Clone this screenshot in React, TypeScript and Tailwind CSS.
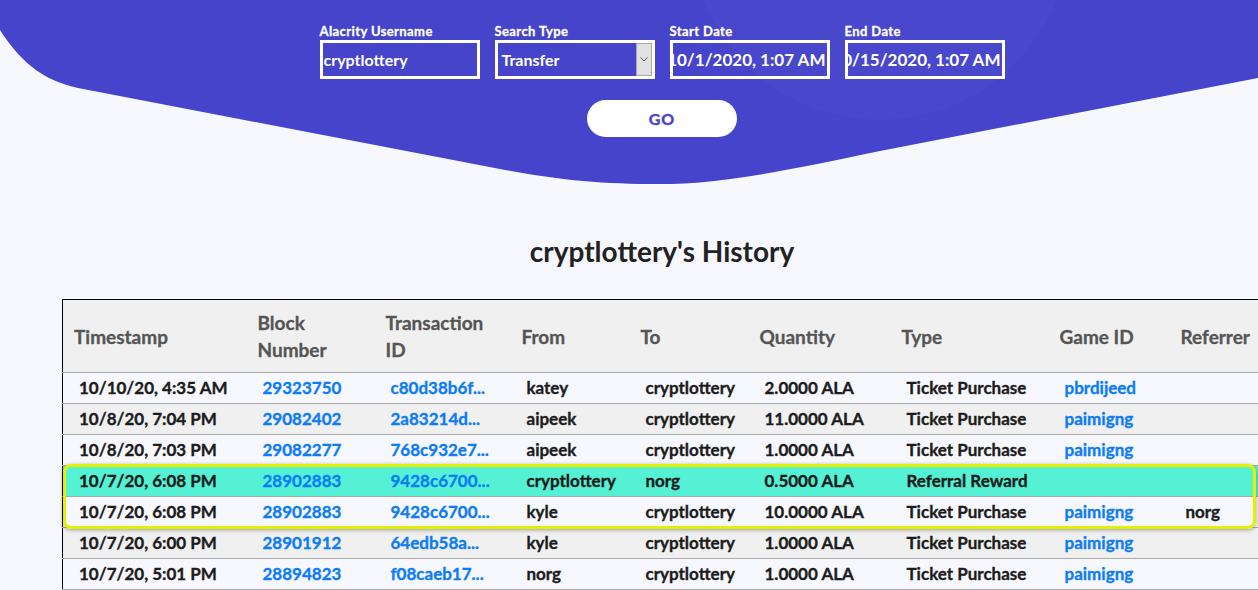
import React from 'react';

interface Row {
  time: string;
  block: string;
  tx: string;
  from: string;
  to: string;
  qty: string;
  type: string;
  game: string;
  referrer: string;
}

const rows: Row[] = [
  { time: '10/10/20, 4:35 AM', block: '29323750', tx: 'c80d38b6f...', from: 'katey', to: 'cryptlottery', qty: '2.0000 ALA', type: 'Ticket Purchase', game: 'pbrdijeed', referrer: '' },
  { time: '10/8/20, 7:04 PM', block: '29082402', tx: '2a83214d...', from: 'aipeek', to: 'cryptlottery', qty: '11.0000 ALA', type: 'Ticket Purchase', game: 'paimigng', referrer: '' },
  { time: '10/8/20, 7:03 PM', block: '29082277', tx: '768c932e7...', from: 'aipeek', to: 'cryptlottery', qty: '1.0000 ALA', type: 'Ticket Purchase', game: 'paimigng', referrer: '' },
  { time: '10/7/20, 6:08 PM', block: '28902883', tx: '9428c6700...', from: 'cryptlottery', to: 'norg', qty: '0.5000 ALA', type: 'Referral Reward', game: '', referrer: '' },
  { time: '10/7/20, 6:08 PM', block: '28902883', tx: '9428c6700...', from: 'kyle', to: 'cryptlottery', qty: '10.0000 ALA', type: 'Ticket Purchase', game: 'paimigng', referrer: 'norg' },
  { time: '10/7/20, 6:00 PM', block: '28901912', tx: '64edb58a...', from: 'kyle', to: 'cryptlottery', qty: '1.0000 ALA', type: 'Ticket Purchase', game: 'paimigng', referrer: '' },
  { time: '10/7/20, 5:01 PM', block: '28894823', tx: 'f08caeb17...', from: 'norg', to: 'cryptlottery', qty: '1.0000 ALA', type: 'Ticket Purchase', game: 'paimigng', referrer: '' },
];

function Field({ label, children }: { label: string; children: React.ReactNode }) {
  return (
    <div className="w-[160px] flex flex-col">
      <span className="text-[13px] font-bold tracking-[0.4px] text-white leading-[14px] mb-[2px] [-webkit-text-stroke:0.3px_currentColor]">{label}</span>
      <div className="h-[39px] border-[3px] border-white flex items-center overflow-hidden">{children}</div>
    </div>
  );
}

export default function App() {
  return (
    <div className="relative min-h-screen overflow-hidden bg-[#f7f8fe] font-['Lato','Liberation_Sans',sans-serif]">
      {/* blue header wave */}
      <svg className="absolute top-0 left-0" width="1258" height="190" viewBox="0 0 1258 190">
        <path
          d="M0,0 H1258 V78 L880,151 C780,172 720,184 660,184 C600,184 560,180 500,169 L78,88 C40,80 18,58 0,30 Z"
          fill="#4544cb"
        />
        <circle cx="880" cy="-70" r="190" fill="#ffffff" fillOpacity="0.025" />
      </svg>

      <div className="relative w-[1324px] flex flex-col items-center">
        {/* search form */}
        <div className="flex gap-[15px] pt-[24px]">
          <Field label="Alacrity Username">
            <span className="pl-[1px] text-[16px] font-bold text-white">cryptlottery</span>
          </Field>
          <Field label="Search Type">
            <span className="flex-1 pl-[4px] text-[16px] font-bold text-white">Transfer</span>
            <span className="w-[16px] h-[33px] bg-[#e1e1e1] border border-[#a9a9a9] flex items-center justify-center">
              <svg width="8" height="5" viewBox="0 0 8 5">
                <path d="M0.5 0.5 L4 4 L7.5 0.5" stroke="#555" strokeWidth="1" fill="none" />
              </svg>
            </span>
          </Field>
          <Field label="Start Date">
            <div className="w-full flex justify-end pr-[1px]">
              <span className="whitespace-nowrap text-[17px] font-bold text-white">10/1/2020, 1:07 AM</span>
            </div>
          </Field>
          <Field label="End Date">
            <div className="w-full flex justify-end pr-[1px]">
              <span className="whitespace-nowrap text-[17px] font-bold text-white">10/15/2020, 1:07 AM</span>
            </div>
          </Field>
        </div>

        <button className="mt-[21px] w-[150px] h-[37px] rounded-full bg-white text-[#4544cb] text-[16px] font-bold tracking-[1px] [-webkit-text-stroke:0.4px_currentColor]">GO</button>

        <h1 className="mt-[97px] text-[28px] font-bold text-[#222] leading-[34px]">cryptlottery's History</h1>

        {/* history table */}
        <div className="relative mt-[31px] w-[1200px]">
          <table className="w-full table-fixed border-collapse border-l border-t border-black">
            <colgroup>
              <col className="w-[184px]" />
              <col className="w-[128px]" />
              <col className="w-[136px]" />
              <col className="w-[119px]" />
              <col className="w-[119px]" />
              <col className="w-[142px]" />
              <col className="w-[158px]" />
              <col className="w-[121px]" />
              <col className="w-[93px]" />
            </colgroup>
            <thead>
              <tr className="h-[73px] bg-[#f0f0f0] border-b border-[#aaa] text-left text-[19px] leading-[27px] text-[#555] font-bold [-webkit-text-stroke:0.3px_currentColor]">
                <th className="pl-[11px]">Timestamp</th>
                <th className="pl-[11px]">Block<br />Number</th>
                <th className="pl-[11px]">Transaction<br />ID</th>
                <th className="pl-[11px]">From</th>
                <th className="pl-[11px]">To</th>
                <th className="pl-[11px]">Quantity</th>
                <th className="pl-[11px]">Type</th>
                <th className="pl-[11px]">Game ID</th>
                <th className="pl-[11px]">Referrer</th>
              </tr>
            </thead>
            <tbody>
              {rows.map((r, i) => (
                <tr
                  key={i}
                  className={
                    'h-[31px] border-b border-[#aaa] text-[17px] font-bold text-[#1c1c1c] [-webkit-text-stroke:0.35px_currentColor] ' +
                    (i === 3 ? 'bg-[#55f1d4]' : i % 2 === 1 ? 'bg-[#f0f0f0]' : 'bg-[#f7f8fe]')
                  }
                >
                  <td className="pl-[16px] whitespace-nowrap">{r.time}</td>
                  <td className="pl-[16px] text-[#0d7cf6]">{r.block}</td>
                  <td className="pl-[16px] text-[#0d7cf6] whitespace-nowrap">{r.tx}</td>
                  <td className="pl-[16px]">{r.from}</td>
                  <td className="pl-[16px]">{r.to}</td>
                  <td className="pl-[16px] whitespace-nowrap">{r.qty}</td>
                  <td className="pl-[16px] whitespace-nowrap">{r.type}</td>
                  <td className="pl-[16px] text-[#0d7cf6]">{r.game}</td>
                  <td className="pl-[16px]">{r.referrer}</td>
                </tr>
              ))}
            </tbody>
          </table>
          {/* highlight around the linked rows */}
          <div className="absolute left-[1px] top-[165px] w-[1193px] h-[65px] rounded-[8px] border-[3px] border-[#e3f000] shadow-[0_1px_4px_rgba(0,0,0,0.35)] pointer-events-none" />
        </div>
      </div>
    </div>
  );
}
